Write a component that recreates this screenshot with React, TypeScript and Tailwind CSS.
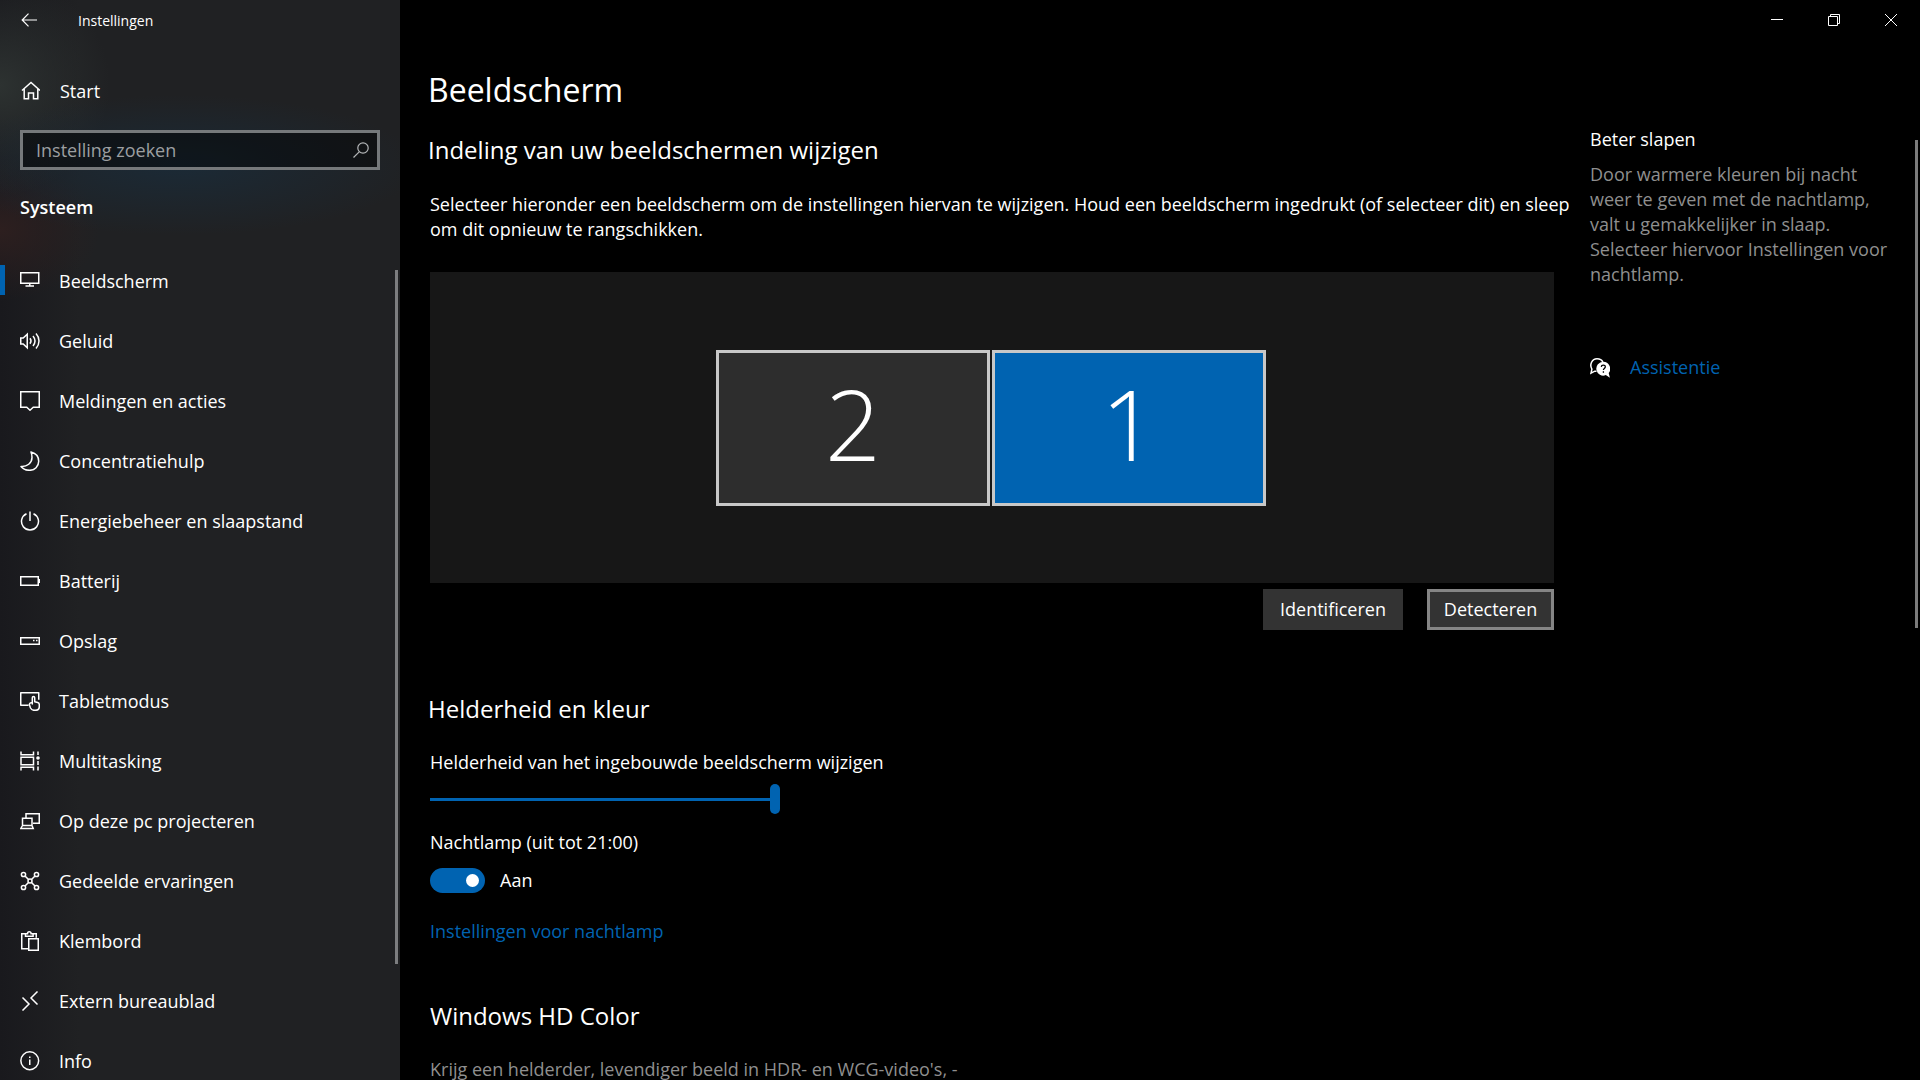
import { clsx } from "clsx";
import { useState } from "react";

function Icon({ children }: { children: React.ReactNode }) {
  return (
    <svg
      viewBox="0 0 20 20"
      fill="none"
      stroke="currentColor"
      strokeWidth="1.5"
      aria-hidden="true"
      className="size-5 shrink-0"
    >
      {children}
    </svg>
  );
}

const navigation = [
  {
    name: "Beeldscherm",
    icon: <path d="M.75 1.75h18v10.5h-18zM9.75 12v3M5.5 15h8.5" />,
  },
  {
    name: "Geluid",
    icon: (
      <path d="M.75 7v6h2.5l4 3.8V3.2L3.2 7zM10 7.3c1.2 1.6 1.2 3.8 0 5.4M13 5c2.4 3 2.4 7 0 10M16 2.5c4 4.4 4 10.6 0 15" />
    ),
  },
  {
    name: "Meldingen en acties",
    icon: <path d="M.75.75h18.5v15.5h-6L10 19.2l-3.25-2.95h-6z" />,
  },
  {
    name: "Concentratiehulp",
    icon: (
      <path
        strokeLinejoin="round"
        d="M11 1c4.8 1.2 7.7 5 7.7 9.3 0 5-4 9-9 9-3.6 0-6.7-1.3-8.7-3.8 6 .5 11-3.5 11-9 0-2-.3-3.8-1-5.5z"
      />
    ),
  },
  {
    name: "Energiebeheer en slaapstand",
    icon: <path d="M10 .5V10M6.5 2.7a8.5 8.5 0 1 0 7 0" />,
  },
  {
    name: "Batterij",
    icon: <path d="M.75 5.75h17.5v8.5H.75zM19.25 8v4" />,
  },
  {
    name: "Opslag",
    icon: <path d="M.75 6.75h18.5v6.5H.75zM13 9.5h1.5M16 9.5h1.5" />,
  },
  {
    name: "Tabletmodus",
    icon: (
      <path
        strokeLinejoin="round"
        d="M8.5 14.25H.75V1.75h18v7M12.3 13V6.7c0-1.5 2.4-1.5 2.4 0v4l3 .7c1.2.3 1.6 1 1.6 2.2v1.9c0 2.4-1.6 3.8-3.9 3.8h-1.2c-1.8 0-2.9-.8-3.7-2.3l-1.1-3.2c0-1.8.9-2.3 2.9-1.8z"
      />
    ),
  },
  {
    name: "Multitasking",
    icon: (
      <>
        <path d="M1 .5v3.25h12.5V.5M1 6.25h12.5v7.5H1zM1 19.5v-3.25h12.5v3.25M18 .5V4M18 10v4M18 15.5v4" />
        <circle cx="18" cy="7" r="1.8" fill="currentColor" stroke="none" />
      </>
    ),
  },
  {
    name: "Op deze pc projecteren",
    icon: (
      <path d="M6 7V2.75h13.25v9.5H13M2.5 14V7.25H12V14M2.5 14.5L.8 17.5h12.4L12 14.5z" />
    ),
  },
  {
    name: "Gedeelde ervaringen",
    icon: (
      <>
        <circle cx="3.5" cy="3.5" r="2.1" />
        <circle cx="16.5" cy="3.5" r="2.1" />
        <circle cx="3.5" cy="16.5" r="2.1" />
        <circle cx="16.5" cy="16.5" r="2.1" />
        <circle cx="10" cy="10" r="2" />
        <path d="M5 5l3.5 3.5M15 5l-3.5 3.5M5 15l3.5-3.5M15 15l-3.5-3.5" />
      </>
    ),
  },
  {
    name: "Klembord",
    icon: (
      <path d="M8 17.75H1.75v-15H5M13 2.75h3.25v4M5.5 5.25v-2.5h2c0-2.6 3.6-2.6 3.6 0h2v2.5zM8.75 7.75h9.5v11.5h-9.5z" />
    ),
  },
  {
    name: "Extern bureaublad",
    icon: <path d="M2.5 6.500L9 13l-6.5 6.5M17.5.5L11 7l6.5 6.5" />,
  },
  {
    name: "Info",
    icon: (
      <>
        <circle cx="9.75" cy="9.75" r="8.9" />
        <path d="M9.75 8.500V14M9.75 5.5v1.6" />
      </>
    ),
  },
];

const displays = [
  { id: 2, primary: false },
  { id: 1, primary: true },
];

function Sidebar() {
  let [current, setCurrent] = useState("Beeldscherm");

  return (
    <div className="flex w-[400px] shrink-0 flex-col bg-[#202123] bg-[radial-gradient(240px_70px_at_180px_165px,#1b2a36_0%,transparent_100%),radial-gradient(110px_110px_at_0px_85px,#2d3231_0%,transparent_100%),radial-gradient(100px_70px_at_0px_230px,#2d1f1f_0%,transparent_100%),linear-gradient(to_right,#19191d_0px,#202123_80px)]">
      <div className="flex h-10 items-center gap-10 pl-5">
        <button type="button" aria-label="Terug">
          <svg
            viewBox="0 0 18 18"
            fill="none"
            stroke="currentColor"
            strokeWidth="1.2"
            aria-hidden="true"
            className="size-[18px]"
          >
            <path d="M17 9H2.5M8.500 2.700L2.2 9l6.3 6.3" />
          </svg>
        </button>
        <span className="text-[14px]">Instellingen</span>
      </div>
      <a href="#start" className="mt-6 flex h-[54px] items-center gap-5 pl-5">
        <Icon>
          <path d="M2 9.500l9-8 9 8M4.200 8v9.750h4.300V12h5v5.750h4.300V8" />
        </Icon>
        Start
      </a>
      <div className="mx-5 mt-3 flex h-10 items-center border-3 border-[#76797b] bg-black/45 pr-2 pl-[13px]">
        <input
          type="text"
          aria-label="Instelling zoeken"
          placeholder="Instelling zoeken"
          className="min-w-0 flex-1 bg-transparent outline-none placeholder:text-[#9c9fa1]"
        />
        <svg
          viewBox="0 0 16 16"
          fill="none"
          stroke="#b4b6b8"
          strokeWidth="1.2"
          aria-hidden="true"
          className="size-4"
        >
          <circle cx="10" cy="6" r="5.2" />
          <path d="M6.200 9.800L.5 15.5" />
        </svg>
      </div>
      <h2 className="mt-[25px] pl-5 font-semibold">Systeem</h2>
      <nav className="relative mt-[31px] min-h-0 flex-1 overflow-hidden">
        <ul>
          {navigation.map(({ name, icon }) => (
            <li key={name}>
              <a
                href="#"
                onClick={() => setCurrent(name)}
                className="relative flex h-[60px] items-center gap-[19px] pl-5"
              >
                {current === name && (
                  <span className="absolute top-[14px] left-0 h-[30px] w-[5px] bg-[#0063b1]" />
                )}
                <Icon>{icon}</Icon>
                {name}
              </a>
            </li>
          ))}
        </ul>
        <div className="absolute top-[19px] right-0.5 h-[694px] w-[3px] bg-[#7c7d7f]" />
      </nav>
    </div>
  );
}

function WindowControls() {
  return (
    <div className="flex h-10 shrink-0 justify-end pr-px">
      <button
        type="button"
        aria-label="Minimaliseren"
        className="grid w-[57px] place-items-center"
      >
        <svg viewBox="0 0 12 12" stroke="currentColor" className="size-3">
          <path d="M0 5.5h12" />
        </svg>
      </button>
      <button
        type="button"
        aria-label="Herstellen"
        className="grid w-[57px] place-items-center"
      >
        <svg
          viewBox="0 0 12 12"
          fill="none"
          stroke="currentColor"
          className="size-3"
        >
          <path d="M.5 2.5h9v9h-9zM2.5 2.5v-2h9v9h-2" />
        </svg>
      </button>
      <button
        type="button"
        aria-label="Sluiten"
        className="grid w-[57px] place-items-center"
      >
        <svg viewBox="0 0 12 12" stroke="currentColor" className="size-3">
          <path d="M0 0l12 12M12 0L0 12" />
        </svg>
      </button>
    </div>
  );
}

function DisplayArrangement() {
  return (
    <div className="ml-0.5">
      <div className="flex h-[311px] items-center justify-center gap-0.5 bg-[#171717] pr-0.5">
        {displays.map(({ id, primary }) => (
          <button
            key={id}
            type="button"
            aria-label={`Beeldscherm ${id}`}
            className={clsx(
              "h-[156px] w-[274px] border-3 border-[#c8c8c8] pb-2.5 text-[98px] leading-[140px] font-light",
              primary ? "bg-[#0063b1]" : "bg-[#2d2d2d]",
            )}
          >
            {id}
          </button>
        ))}
      </div>
      <div className="mt-1.5 flex justify-end gap-6">
        <button type="button" className="h-[41px] w-[140px] bg-[#333333]">
          Identificeren
        </button>
        <button
          type="button"
          className="h-[41px] w-[127px] border-3 border-[#858585] bg-[#333333]"
        >
          Detecteren
        </button>
      </div>
    </div>
  );
}

function Brightness() {
  let [level, setLevel] = useState(100);
  let [nightLight, setNightLight] = useState(true);

  return (
    <section className="mt-[62px]">
      <h2 className="text-[24px] leading-[34px]">Helderheid en kleur</h2>
      <div className="mt-6 ml-0.5 flex flex-col items-start">
        <label htmlFor="brightness">
          Helderheid van het ingebouwde beeldscherm wijzigen
        </label>
        <input
          id="brightness"
          type="range"
          value={level}
          onChange={(event) => setLevel(Number(event.target.value))}
          className="mt-[9px] h-[30px] w-[350px] appearance-none bg-transparent [&::-webkit-slider-runnable-track]:h-[3px] [&::-webkit-slider-runnable-track]:bg-[#0063b1] [&::-webkit-slider-thumb]:-mt-[14px] [&::-webkit-slider-thumb]:h-[30px] [&::-webkit-slider-thumb]:w-[10px] [&::-webkit-slider-thumb]:appearance-none [&::-webkit-slider-thumb]:rounded-full [&::-webkit-slider-thumb]:bg-[#0063b1]"
        />
        <label htmlFor="night-light" className="mt-4">
          Nachtlamp (uit tot 21:00)
        </label>
        <div className="mt-[13px] flex items-center gap-[15px]">
          <input
            id="night-light"
            type="checkbox"
            role="switch"
            checked={nightLight}
            onChange={(event) => setNightLight(event.target.checked)}
            className="flex h-[25px] w-[55px] appearance-none items-center rounded-full bg-[#333333] px-1.5 before:size-[13px] before:rounded-full before:bg-white checked:justify-end checked:bg-[#0063b1]"
          />
          <span>{nightLight ? "Aan" : "Uit"}</span>
        </div>
        <a href="#nachtlamp" className="mt-[26px] text-[#0063b1]">
          Instellingen voor nachtlamp
        </a>
      </div>
    </section>
  );
}

function HelpPanel() {
  return (
    <aside className="w-[330px] shrink-0 pt-[87px] pr-8">
      <h2>Beter slapen</h2>
      <p className="mt-2.5 text-[#8f8f8f]">
        Door warmere kleuren bij nacht weer te geven met de nachtlamp, valt u
        gemakkelijker in slaap. Selecteer hiervoor Instellingen voor nachtlamp.
      </p>
      <a
        href="#assistentie"
        className="mt-[68px] flex items-center gap-5 text-[#0063b1]"
      >
        <svg
          viewBox="0 0 20 20"
          fill="none"
          aria-hidden="true"
          className="size-5 shrink-0 text-white"
        >
          <path
            d="M6.5 13.2H4.8L1 15.2l.9-4.1C-.8 6.5 2 .8 7 .8c3 0 5 1.4 5.800 3.3"
            stroke="currentColor"
            strokeWidth="1.5"
          />
          <path
            d="M13.2 3.8a6.9 6.9 0 1 0 2.6 13.3l4.1 2.6-1.2-4.7a6.9 6.9 0 0 0-5.5-11.2z"
            fill="currentColor"
          />
          <path
            d="M11.3 8.9c.1-2.4 4.1-2.3 4 0-.1 1.5-1.9 1.5-1.9 3.1M13.4 13.2v1.5"
            stroke="black"
            strokeWidth="1.3"
          />
        </svg>
        Assistentie
      </a>
    </aside>
  );
}

export default function App() {
  return (
    <div className="flex h-screen overflow-hidden bg-black font-['Open_Sans',sans-serif] text-[18px] leading-[25px] text-white">
      <Sidebar />
      <div className="relative flex min-w-0 flex-1 flex-col">
        <WindowControls />
        <div className="flex min-h-0 flex-1 gap-9 pl-7">
          <main className="min-w-0 flex-1 pt-[26px]">
            <h1 className="text-[32px] leading-[48px]">Beeldscherm</h1>
            <h2 className="mt-[19px] text-[24px] leading-[34px]">
              Indeling van uw beeldschermen wijzigen
            </h2>
            {/* the text may run a little past the preview below it */}
            <p className="-mr-5 mt-[25px] mb-[30px] ml-0.5">
              Selecteer hieronder een beeldscherm om de instellingen hiervan te
              wijzigen. Houd een beeldscherm ingedrukt (of selecteer dit) en
              sleep om dit opnieuw te rangschikken.
            </p>
            <DisplayArrangement />
            <Brightness />
            <section className="mt-[55px] ml-0.5">
              <h2 className="text-[24px] leading-[34px]">Windows HD Color</h2>
              <p className="mt-6 text-[#8f8f8f]">
                Krijg een helderder, levendiger beeld in HDR- en WCG-video's, -
              </p>
            </section>
          </main>
          <HelpPanel />
        </div>
        <div className="absolute top-[140px] right-0.5 h-[488px] w-[3px] bg-[#7c7c7c]" />
      </div>
    </div>
  );
}
